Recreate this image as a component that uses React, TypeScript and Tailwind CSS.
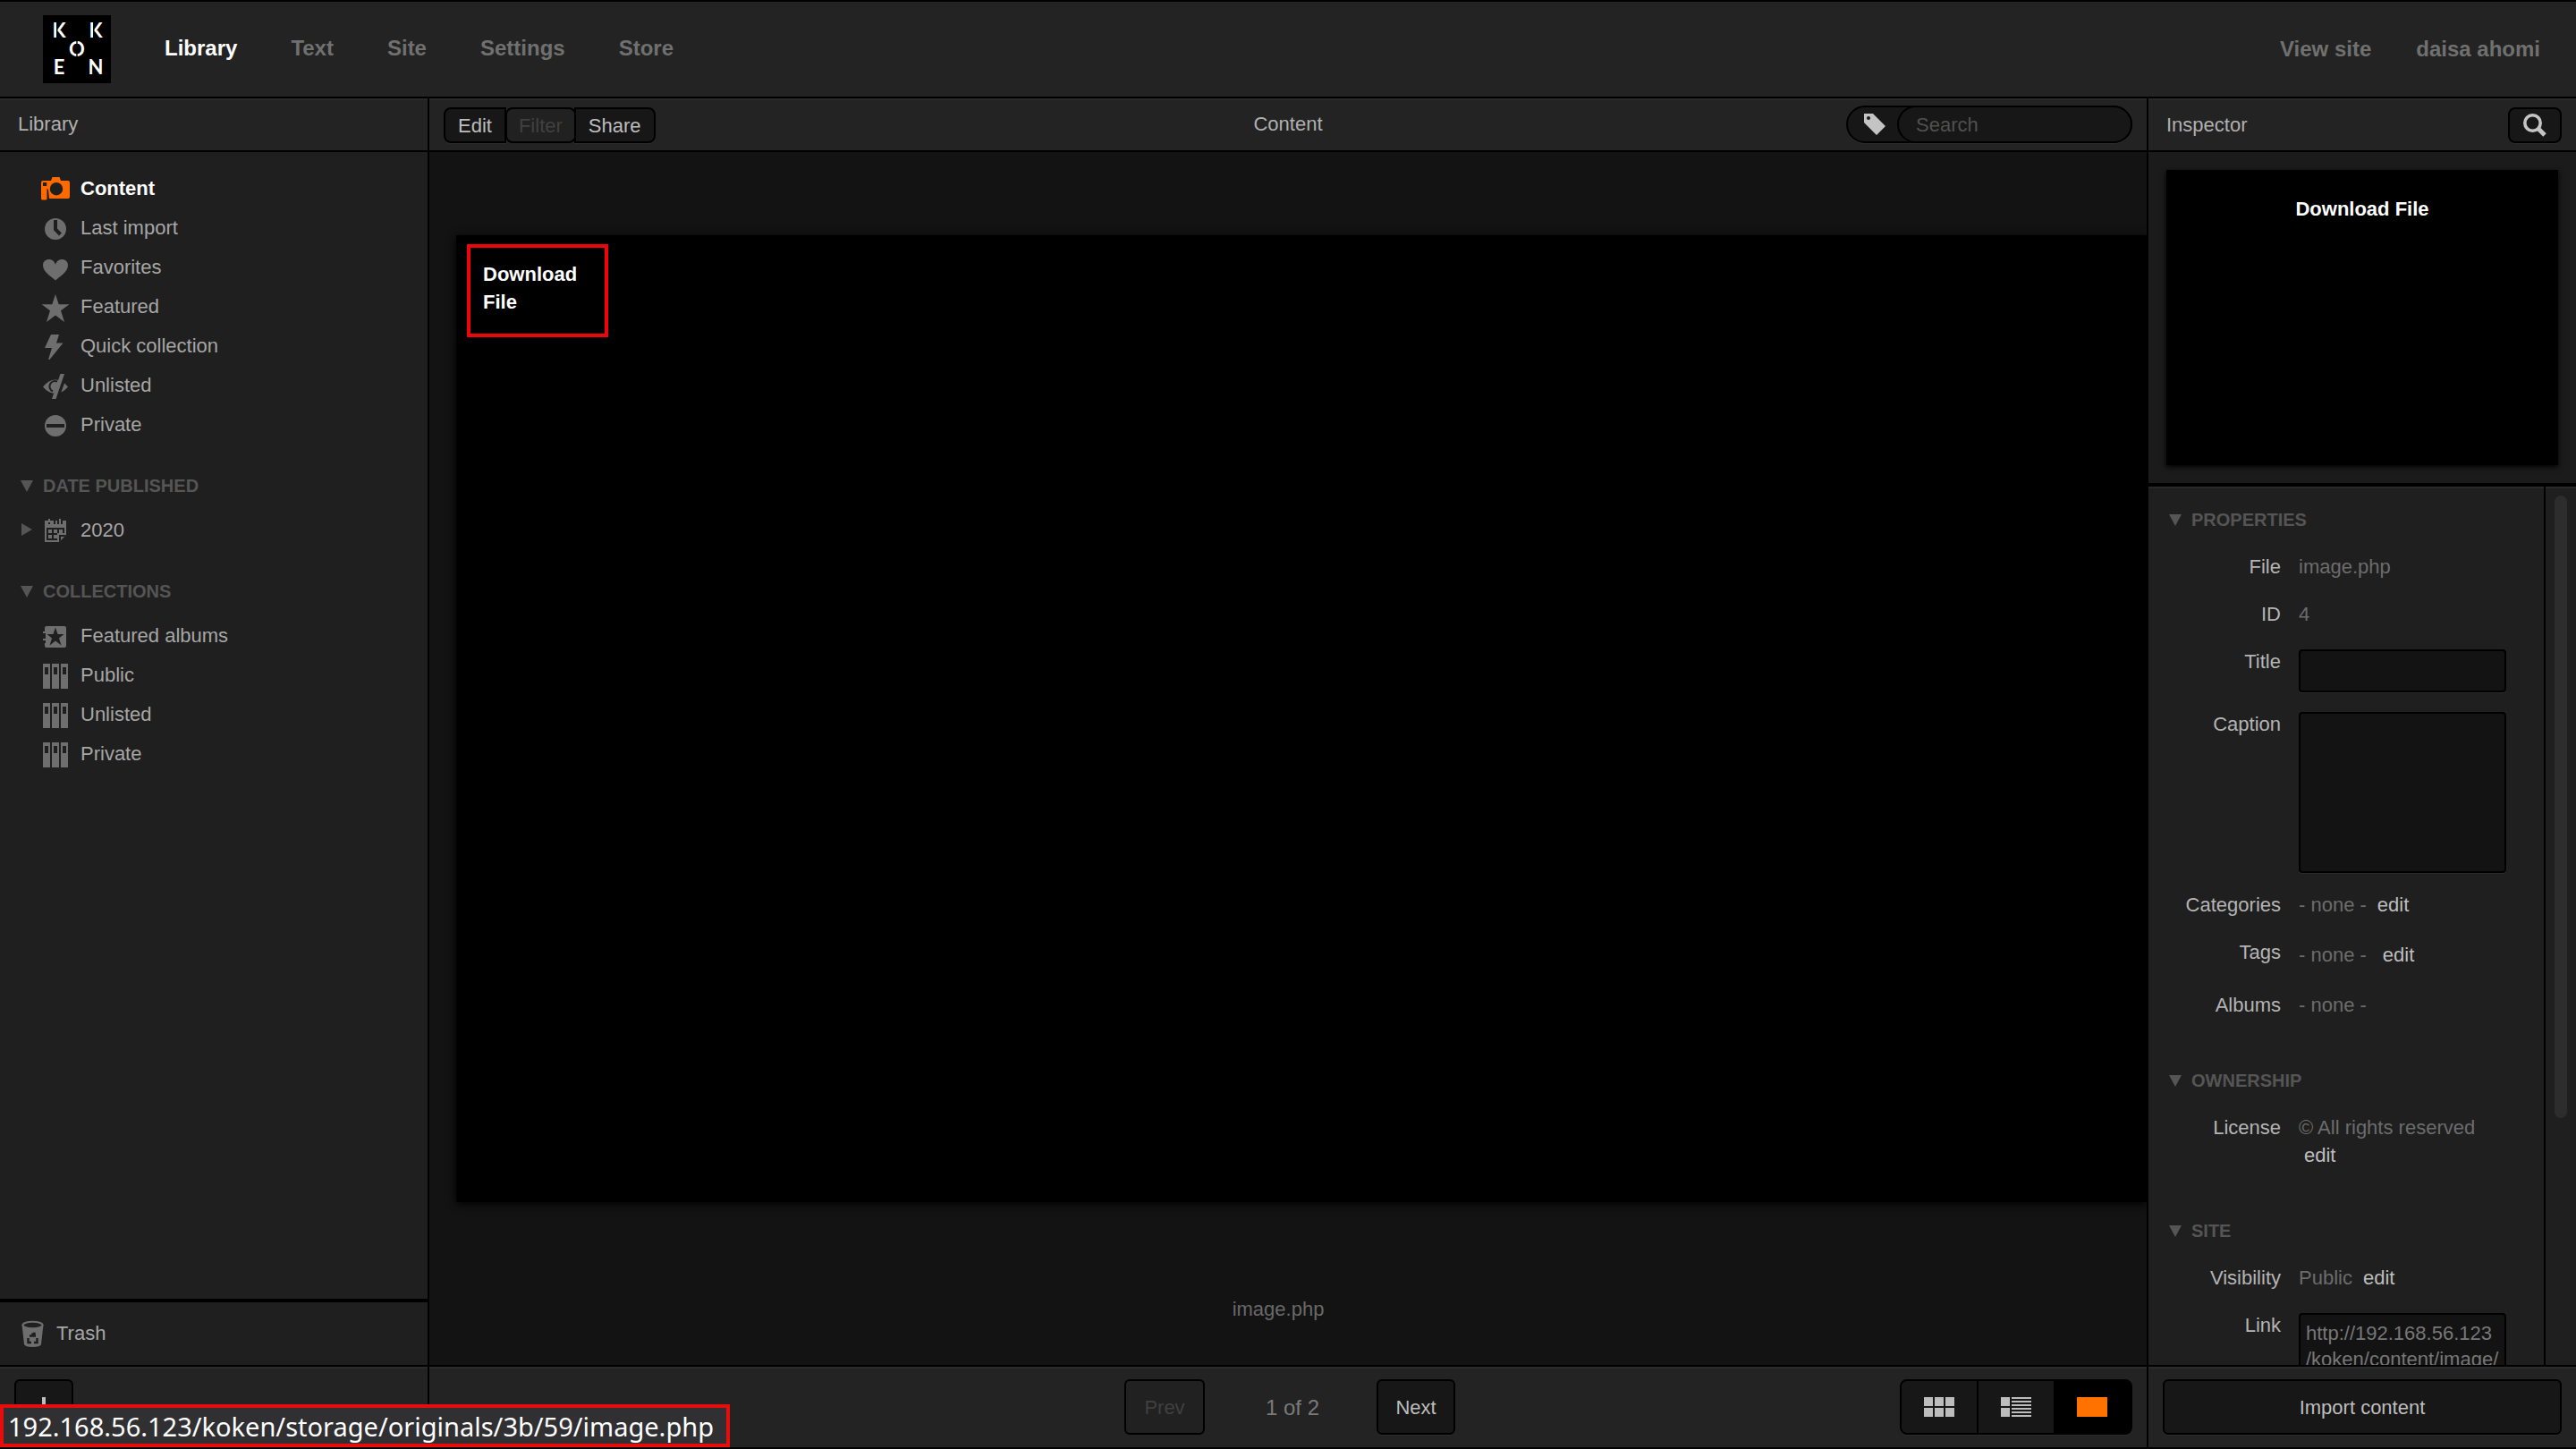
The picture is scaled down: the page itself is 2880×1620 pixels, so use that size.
import type { ReactNode } from "react";

const navItems = ["Library", "Text", "Site", "Settings", "Store"];

function RowIcon({ children, className = "text-[#6e6e6e]" }: { children: ReactNode; className?: string }) {
  return (
    <svg aria-hidden="true" viewBox="0 0 32 44" className={`h-11 w-8 shrink-0 fill-current ${className}`}>
      {children}
    </svg>
  );
}

function CameraIcon() {
  return (
    <RowIcon className="text-[#ff6a00]">
      <path
        fillRule="evenodd"
        d="M2 14H11L12.500 10H20.500L22 14H30Q32 14 32 16V32Q32 34 30 34H9L8 24L6.500 23V34Q6.500 35.500 5 35.500H1.500Q0 35.500 0 34V16Q0 14 2 14ZM2 16V20H6.200V16ZM17 16A7.200 7.200 0 1 0 17 30.400A7.200 7.200 0 1 0 17 16Z"
      />
    </RowIcon>
  );
}

function ClockIcon() {
  return (
    <RowIcon>
      <circle cx="16" cy="24" r="12" />
      <path d="M16 14V24.500L21.500 30" fill="none" stroke="#1f1f1f" strokeWidth="4" />
    </RowIcon>
  );
}

function HeartIcon() {
  return (
    <RowIcon>
      <path d="M16 37.500C12 33.500 2 28.500 2 20.500C2 16.500 5 14 8.800 14C12 14 15 16 16 20C17 16 20 14 23.200 14C27 14 30 16.500 30 20.500C30 28.500 20 33.500 16 37.500Z" />
    </RowIcon>
  );
}

function StarIcon() {
  return (
    <RowIcon>
      <path d="M16 9L19.700 20.200H31.500L22 27.200L26 40L16 32.600L6 40L10 27.200L0.500 20.200H12.300Z" />
    </RowIcon>
  );
}

function BoltIcon() {
  return (
    <RowIcon>
      <path d="M11 10H20L17 19.500H24.500L9.500 38H8L12 25H4Z" />
    </RowIcon>
  );
}

function HiddenIcon() {
  return (
    <RowIcon>
      <path d="M2 24.500Q8.500 16.500 16 16.500Q23.500 16.500 30 24.500Q23.500 32 16 32Q8.500 32 2 24.500Z" />
      <path d="M18 18.500A6 6 0 0 0 13 29.500" fill="none" stroke="#1f1f1f" strokeWidth="2" />
      <path d="M26.500 9L15.500 39" stroke="#1f1f1f" strokeWidth="7" />
      <path d="M21.500 10H26L16.500 38H12Z" />
    </RowIcon>
  );
}

function PrivateIcon() {
  return (
    <RowIcon>
      <circle cx="16" cy="24" r="12" />
      <path d="M6 22H26V26H6Z" fill="#1f1f1f" />
    </RowIcon>
  );
}

function CalendarIcon() {
  return (
    <RowIcon>
      <path
        fillRule="evenodd"
        d="M4 12H8V16H10V12H14V16H16V12H18V16H20V12H22V16H24V12H28V28L20 36H4ZM6 20V34H18V26H26V20Z"
      />
      <path d="M8 22H12V26H8ZM14 22H18V26H14ZM20 22H24V26H20ZM8 28H12V32H8ZM14 28H18V32H14Z" />
      <path d="M8 10H10V14H8ZM20 10H22V14H20Z" />
      <path d="M20 28H28V28L20 36Z" fill="#1f1f1f" />
      <path d="M22 30H26L22 34Z" />
    </RowIcon>
  );
}

function AlbumIcon() {
  return (
    <RowIcon>
      <path d="M6 12H26Q28 12 28 14V34Q28 36 26 36H6Q4 36 4 34V31H5V28H2V26H5V20H2V18H4V14Q4 12 6 12Z" />
      <path d="M16 13.500L18.500 21H25.500L20 25.500L22.500 33.500L16 28.500L9.500 33.500L12 25.500L6.500 21H13.500Z" fill="#1f1f1f" />
    </RowIcon>
  );
}

function BindersIcon() {
  return (
    <RowIcon>
      <path
        fillRule="evenodd"
        d="M2 10H10V38H2ZM4 14V22H8V14ZM12 10H20V38H12ZM14 14V22H18V14ZM22 10H30V38H22ZM24 14V22H28V14Z"
      />
    </RowIcon>
  );
}

const libraryItems = [
  { label: "Content", icon: <CameraIcon />, active: true },
  { label: "Last import", icon: <ClockIcon /> },
  { label: "Favorites", icon: <HeartIcon /> },
  { label: "Featured", icon: <StarIcon /> },
  { label: "Quick collection", icon: <BoltIcon /> },
  { label: "Unlisted", icon: <HiddenIcon /> },
  { label: "Private", icon: <PrivateIcon /> },
];

const collectionItems = [
  { label: "Featured albums", icon: <AlbumIcon /> },
  { label: "Public", icon: <BindersIcon /> },
  { label: "Unlisted", icon: <BindersIcon /> },
  { label: "Private", icon: <BindersIcon /> },
];

function SideItem({ label, icon, active = false, lead }: { label: string; icon: ReactNode; active?: boolean; lead?: ReactNode }) {
  return (
    <li className="flex h-11 items-center">
      <span className="flex w-[46px] pl-6">{lead}</span>
      <a href="#" className={`flex items-center gap-3 ${active ? "font-bold text-white" : "text-[#a6a6a6]"}`}>
        {icon}
        <span className="pt-0.5">{label}</span>
      </a>
    </li>
  );
}

function Heading({ children, className = "" }: { children: ReactNode; className?: string }) {
  return (
    <h2 className={`flex items-center gap-[11px] pl-[23px] text-[20px] leading-[30px] font-bold text-[#555] ${className}`}>
      <svg aria-hidden="true" viewBox="0 0 14 14" className="size-3.5 shrink-0 fill-current">
        <path d="M0 1H14L7 14Z" />
      </svg>
      {children}
    </h2>
  );
}

function Logo() {
  return (
    <a href="#" aria-label="Koken" className="shrink-0">
      <svg viewBox="0 0 76 76" className="size-[76px] bg-black">
        <g fill="#fff" textAnchor="middle" className="font-['Lato',sans-serif] text-[22px] font-bold">
          <text x="18" y="25">K</text>
          <text x="59" y="25">K</text>
          <text x="38" y="46">O</text>
          <text x="18" y="66">E</text>
          <text x="59" y="66">N</text>
        </g>
        <path d="M15 8H16.500V26H15ZM56 8H57.500V26H56ZM37.300 29H38.700V47H37.300Z" fill="#000" />
      </svg>
    </a>
  );
}

function Field({ label, htmlFor, children }: { label: string; htmlFor?: string; children: ReactNode }) {
  return (
    <div className="flex gap-5">
      {htmlFor ? (
        <label htmlFor={htmlFor} className="w-[148px] shrink-0 text-right text-[#b4b4b4]">
          {label}
        </label>
      ) : (
        <span className="w-[148px] shrink-0 text-right text-[#b4b4b4]">{label}</span>
      )}
      <div className="min-w-0 flex-1 text-[#6c6c6c]">{children}</div>
    </div>
  );
}

function Edit({ className = "ml-3" }: { className?: string }) {
  return (
    <button type="button" className={`text-[#bdbdbd] ${className}`}>
      edit
    </button>
  );
}

const inputStyle =
  "mt-0.5 -mb-0.5 block w-full resize-none overflow-hidden rounded-sm border-2 border-black bg-[#131313] px-1.5 text-[#777] shadow-[0_1px_0_#2b2b2b]";
const barStyle = "flex h-[60px] shrink-0 items-center border-b-2 border-black bg-[#232323] pt-0.5 shadow-[inset_0_2px_0_#292929]";
const footStyle = "flex h-[92px] shrink-0 items-center border-t-2 border-black bg-[#232323] shadow-[inset_0_2px_0_#2b2b2b]";
const buttonStyle = "border-2 border-black bg-[#171717] text-[#bdbdbd] shadow-[0_1px_0_#2c2c2c]";

function Library() {
  return (
    <aside className="flex w-[480px] shrink-0 flex-col border-r-2 border-black bg-[#1f1f1f]">
      <div className={barStyle}>
        <h1 className="pb-0.5 pl-5 text-[#b0b0b0]">Library</h1>
      </div>
      <nav className="flex-1 overflow-hidden pt-[18px]">
        <ul>
          {libraryItems.map((item) => (
            <SideItem key={item.label} {...item} />
          ))}
        </ul>
        <Heading className="mt-8 mb-3">DATE PUBLISHED</Heading>
        <ul>
          <SideItem
            label="2020"
            icon={<CalendarIcon />}
            lead={
              <svg aria-hidden="true" viewBox="0 0 12 14" className="h-3.5 w-3 fill-[#555]">
                <path d="M0 0L12 7L0 14Z" />
              </svg>
            }
          />
        </ul>
        <Heading className="mt-8 mb-3">COLLECTIONS</Heading>
        <ul>
          {collectionItems.map((item) => (
            <SideItem key={item.label} {...item} />
          ))}
        </ul>
      </nav>
      <a href="#" className="flex h-[74px] shrink-0 items-center gap-3.5 border-t-4 border-black pl-6 text-[#a6a6a6]">
        <svg aria-hidden="true" viewBox="0 0 25 30" className="h-[30px] w-[25px]">
          <path d="M0.500 5L3 27Q4 30 12.500 30Q21 30 22 27L24.500 5Z" fill="#6e6e6e" />
          <ellipse cx="12.500" cy="5.500" rx="11" ry="3.800" fill="#1f1f1f" stroke="#6e6e6e" strokeWidth="2" />
          <path
            d="M9 17.500H12.500V14.500M12.500 15H14.500V17.500H16M7.500 20V25H11M17.500 20V25H14"
            fill="none"
            stroke="#1f1f1f"
            strokeWidth="2.500"
          />
        </svg>
        Trash
      </a>
      <div className={footStyle}>
        <button type="button" aria-label="Add" className={`ml-4 flex h-[62px] w-[66px] items-center justify-center rounded-md ${buttonStyle}`}>
          <svg aria-hidden="true" viewBox="0 0 22 22" className="size-[22px] fill-current">
            <path d="M9 0H13V9H22V13H13V22H9V13H0V9H9Z" />
          </svg>
        </button>
      </div>
    </aside>
  );
}

function Content() {
  return (
    <main className="flex min-w-0 flex-1 flex-col bg-[#131313]">
      <div className={`${barStyle} pr-4 pl-4`}>
        <div className="flex flex-1">
          <button type="button" className={`h-10 rounded-l-lg px-[14px] pt-0.5 ${buttonStyle}`}>
            Edit
          </button>
          <button type="button" disabled className="-ml-px h-10 rounded-lg border-2 border-black bg-[#212121] px-[13px] pt-0.5 text-[#404040]">
            Filter
          </button>
          <button type="button" className={`-ml-0.5 h-10 rounded-r-lg px-[14px] pt-0.5 ${buttonStyle}`}>
            Share
          </button>
        </div>
        <h2 className="pb-0.5 text-[#b0b0b0]">Content</h2>
        <div className="flex flex-1 justify-end pb-0.5">
          <div className={`flex h-[42px] w-80 rounded-full ${buttonStyle}`}>
            <button type="button" aria-label="Filter by tag" className="flex w-[55px] items-center pl-[18px]">
              <svg aria-hidden="true" viewBox="0 0 24 24" className="size-6 fill-[#c4c4c4]">
                <path fillRule="evenodd" d="M0 0H10L24 14L14 24L0 10ZM5 3A2 2 0 1 0 5 7A2 2 0 1 0 5 3Z" />
              </svg>
            </button>
            <input
              type="search"
              aria-label="Search"
              placeholder="Search"
              className="-my-0.5 -mr-0.5 h-[42px] min-w-0 flex-1 rounded-full border-2 border-black bg-[#171717] px-[19px] pt-0.5 placeholder:text-[#505050]"
            />
          </div>
        </div>
      </div>
      <div className="mt-[93px] ml-[30px] flex-1 bg-black pt-[10px] pl-3 shadow-[0_2px_10px_#000]">
        <a
          href="#"
          className="block h-[104px] w-[158px] border-4 border-[#ee0509] px-3.5 pt-3.5 leading-[31px] font-bold text-white"
        >
          Download File
        </a>
      </div>
      <p className="h-[182px] shrink-0 pt-[105px] pr-[22px] text-center text-[#696969]">image.php</p>
      <div className={`${footStyle} pr-4 pl-5`}>
        <div className="flex-1" />
        <div className="flex items-center">
          <button type="button" disabled className="h-[62px] w-[90px] rounded-md border-2 border-black bg-[#212121] pt-0.5 text-[#404040]">
            Prev
          </button>
          <span className="w-48 pt-0.5 pl-1 text-center text-[24px] text-[#7a7a7a]">1 of 2</span>
          <button type="button" className={`h-[62px] w-[88px] rounded-md pt-0.5 ${buttonStyle}`}>
            Next
          </button>
        </div>
        <div className="flex flex-1 justify-end">
          <div className={`flex h-[62px] w-[260px] overflow-hidden rounded-lg ${buttonStyle}`}>
            <button type="button" aria-label="Grid view" className="flex w-[86px] items-center justify-center border-r-2 border-black">
              <svg aria-hidden="true" viewBox="0 0 34 22" className="h-[22px] w-[34px] fill-[#bdbdbd]">
                <path d="M0 0H10V10H0ZM12 0H22V10H12ZM24 0H34V10H24ZM0 12H10V22H0ZM12 12H22V22H12ZM24 12H34V22H24Z" />
              </svg>
            </button>
            <button type="button" aria-label="List view" className="flex w-[84px] items-center justify-center">
              <svg aria-hidden="true" viewBox="0 0 34 22" className="h-[22px] w-[34px] fill-[#bdbdbd]">
                <path d="M0 0H10V10H0ZM0 12H10V22H0ZM12 0H34V2H12ZM12 4H34V6H12ZM12 8H34V10H12ZM12 12H34V14H12ZM12 16H34V18H12ZM12 20H34V22H12Z" />
              </svg>
            </button>
            <button type="button" aria-label="Single view" className="flex flex-1 items-center justify-center bg-black">
              <span className="h-[22px] w-[34px] bg-[#ff7200]" />
            </button>
          </div>
        </div>
      </div>
    </main>
  );
}

function Inspector() {
  return (
    <aside className="flex w-[480px] shrink-0 flex-col border-l-2 border-black bg-[#1f1f1f]">
      <div className={`${barStyle} justify-between pr-4 pl-5`}>
        <h2 className="text-[#b0b0b0]">Inspector</h2>
        <button type="button" aria-label="Search" className={`flex h-10 w-[60px] items-center justify-center rounded-lg ${buttonStyle}`}>
          <svg aria-hidden="true" viewBox="0 0 26 26" className="size-[26px]" fill="none" stroke="#c4c4c4">
            <circle cx="10.500" cy="10.500" r="8.700" strokeWidth="3.600" />
            <path d="M17 17L24 24" strokeWidth="5" />
          </svg>
        </button>
      </div>
      <div className="border-b-4 border-black bg-[#1b1b1b] p-5">
        <div className="h-[330px] bg-black pt-7 text-center leading-[31px] font-bold text-white shadow-[0_2px_6px_#000]">Download File</div>
      </div>
      <div className="flex min-h-0 flex-1 shadow-[inset_0_2px_0_#292929]">
        <div className="min-w-0 flex-1 overflow-hidden border-r-2 border-black pt-[22px] pr-[42px] leading-[31px]">
          <Heading className="mb-[22px]">PROPERTIES</Heading>
          <div className="flex flex-col gap-[22px]">
            <Field label="File">image.php</Field>
            <Field label="ID">4</Field>
            <Field label="Title" htmlFor="title">
              <input id="title" className={`h-12 ${inputStyle}`} />
            </Field>
            <Field label="Caption" htmlFor="caption">
              <textarea id="caption" className={`h-[180px] ${inputStyle}`} />
            </Field>
            <Field label="Categories">
              - none -<Edit />
            </Field>
            <Field label="Tags">
              <div className="py-[3px]">
                - none -<Edit className="ml-[18px]" />
              </div>
            </Field>
            <Field label="Albums">- none -</Field>
          </div>
          <Heading className="mt-[54px] mb-[22px]">OWNERSHIP</Heading>
          <Field label="License">
            © All rights reserved
            <br />
            <Edit className="ml-1.5" />
          </Field>
          <Heading className="mt-[54px] mb-[22px]">SITE</Heading>
          <div className="flex flex-col gap-[22px]">
            <Field label="Visibility">
              Public
              <Edit />
            </Field>
            <Field label="Link" htmlFor="link">
              <textarea
                id="link"
                readOnly
                className={`h-32 pt-1.5 leading-[29px] break-all ${inputStyle}`}
                defaultValue={"http://192.168.56.123\n/koken/content/image/"}
              />
            </Field>
          </div>
        </div>
        <div className="w-[34px] pt-2.5 pl-2.5">
          <div className="h-[696px] w-3.5 rounded-full bg-[#2d2d2d]" />
        </div>
      </div>
      <div className={`${footStyle} px-4`}>
        <button type="button" className={`h-[62px] flex-1 rounded-md pt-0.5 ${buttonStyle}`}>
          Import content
        </button>
      </div>
    </aside>
  );
}

export default function App() {
  return (
    <div className="relative flex h-screen flex-col overflow-hidden border-y-2 border-black bg-[#131313] font-['Liberation_Sans',Arial,sans-serif] text-[22px] leading-[30px] text-[#b0b0b0]">
      <header className="flex h-[108px] shrink-0 items-center border-b-2 border-black bg-[#232323] pr-10 pl-12 text-[24px] font-bold text-[#707070]">
        <Logo />
        <nav className="ml-[60px] flex gap-[60px] pb-0.5">
          {navItems.map((item, i) => (
            <a key={item} href="#" className={i === 0 ? "text-white" : ""}>
              {item}
            </a>
          ))}
        </nav>
        <div className="ml-auto flex gap-[50px]">
          <a href="#">View site</a>
          <a href="#">daisa ahomi</a>
        </div>
      </header>
      <div className="flex min-h-0 flex-1">
        <Library />
        <Content />
        <Inspector />
      </div>
      <div className="absolute bottom-0 left-0 border-4 border-[#e80c0c] bg-[#303033] pt-0.5 pr-3.5 pl-[5px] font-['Noto_Sans',sans-serif] text-[29px] leading-[38px] text-white">
        192.168.56.123/koken/storage/originals/3b/59/image.php
      </div>
    </div>
  );
}
